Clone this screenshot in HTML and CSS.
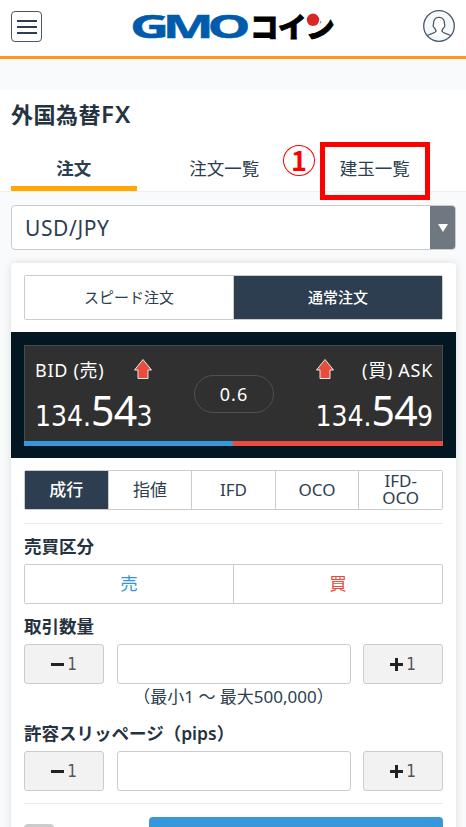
FILE: index.html
```html
<!DOCTYPE html>
<html lang="ja">
<head>
  <meta charset="UTF-8">
  <meta name="viewport" content="width=device-width, initial-scale=1.0">
  <title>外国為替FX | GMOコイン</title>
  <link rel="stylesheet" href="styles.css">
</head>
<body>
  <header>
    <button class="menu" aria-label="メニュー"><span></span><span></span><span></span></button>
    <svg class="logo" width="204" height="30" viewBox="0 0 204 30">
      <text class="logo-gmo" transform="translate(-1 26) scale(1.64 1)" textLength="73.500" lengthAdjust="spacing">GMO</text>
      <text class="logo-coin" transform="translate(119 25.500) scale(1.020 1)" textLength="83" lengthAdjust="spacing">コイン</text>
      <circle cx="182" cy="7.800" r="7.800" fill="#fff"/>
      <circle cx="182" cy="7.800" r="6.200" fill="#d92626"/>
    </svg>
    <svg class="user" width="32" height="32" viewBox="0 0 32 32">
      <circle cx="16" cy="16" r="15.300"/>
      <path d="M4.500 25.500c2.200-1.700 6.200-1.800 8-3.600 1.500-1.600-.3-2.600-1-3.900-1.200-.8-1.700-3-1-4-.2-4.400 1.900-6.600 5.500-6.600s5.700 2.200 5.500 6.600c.7 1 .2 3.200-1 4-.7 1.300-2.500 2.300-1 3.900 1.800 1.800 5.800 1.900 8 3.600"/>
    </svg>
  </header>

  <section class="page-head">
    <h1>外国為替<span>FX</span></h1>
    <nav>
      <a class="active">注文</a>
      <a>注文一覧</a>
      <a class="marked">建玉一覧<span class="mark-num">1</span><span class="mark-box"></span></a>
    </nav>
  </section>

  <main>
    <div class="select">
      <span>USD/JPY</span>
      <i></i>
    </div>

    <div class="card">
      <div class="seg mode">
        <button>スピード注文</button>
        <button class="on">通常注文</button>
      </div>

      <div class="rate">
        <div class="rate-box">
          <div class="side">
            <p class="side-name"><span>BID (売)</span>
              <svg width="20" height="22" viewBox="0 0 20 22"><path d="M10 1.500 18.500 12H15v8.500H5V12H1.500z"/></svg>
            </p>
            <p class="price">134.<b>54</b>3</p>
          </div>
          <div class="spread">0.6</div>
          <div class="side ask">
            <p class="side-name">
              <svg width="20" height="22" viewBox="0 0 20 22"><path d="M10 1.500 18.500 12H15v8.500H5V12H1.500z"/></svg>
              <span>(買) ASK</span></p>
            <p class="price">134.<b>54</b>9</p>
          </div>
        </div>
        <div class="rate-bar"></div>
      </div>

      <div class="seg type">
        <button class="on">成行</button>
        <button>指値</button>
        <button>IFD</button>
        <button>OCO</button>
        <button>IFD-<br>OCO</button>
      </div>

      <div class="form">
        <h2>売買区分</h2>
        <div class="seg trade">
          <button class="sell">売</button>
          <button class="buy">買</button>
        </div>

        <h2>取引数量</h2>
        <div class="stepper">
          <button><i class="minus"></i>1</button>
          <input type="text">
          <button><i class="plus"></i>1</button>
        </div>
        <p class="note">（最小1 ～ 最大500,000）</p>

        <h2>許容スリッページ（pips）</h2>
        <div class="stepper">
          <button><i class="minus"></i>1</button>
          <input type="text">
          <button><i class="plus"></i>1</button>
        </div>
      </div>

      <div class="submit">
        <span class="switch"></span>
        <button class="confirm"></button>
      </div>
    </div>
  </main>
</body>
</html>
```
FILE: styles.css
```css
* { box-sizing: border-box; margin: 0; padding: 0; }
body {
  font-family: "Noto Sans", "Noto Sans CJK JP", sans-serif;
  background: #f9fafc;
  color: #2c3e50;
  height: 827px;
  overflow: hidden;
}
button {
  font-family: inherit;
  color: inherit;
  border: none;
  background: #fff;
}

header {
  height: 59px;
  padding: 0 11px;
  background: #fff;
  border-bottom: 3px solid #fb9a1a;
  display: flex;
  justify-content: space-between;
}
.menu {
  width: 31px;
  height: 31px;
  margin-top: 11px;
  border: 1.500px solid #4a5867;
  border-radius: 4px;
  display: flex;
  flex-direction: column;
  align-items: center;
  justify-content: center;
  gap: 4px;
}
.menu span {
  width: 20px;
  height: 2px;
  background: #2c3e50;
}
.logo {
  margin-top: 12px;
  overflow: visible;
}
.logo-gmo {
  font: 700 33px "Open Sans", sans-serif;
  fill: #005bac;
  stroke: #005bac;
  stroke-width: 0.500;
}
.logo-coin {
  font: 900 28px "Noto Sans CJK JP", sans-serif;
  fill: #000;
  stroke: #000;
  stroke-width: 0.800;
}
.user {
  margin-top: 10px;
}
.user circle {
  fill: #f6f9fc;
  stroke: #4a5867;
  stroke-width: 1.300;
}
.user path {
  fill: #fff;
  stroke: #4a5867;
  stroke-width: 1.300;
}

.page-head {
  height: 102px;
  margin-top: 31px;
  padding: 0 11px;
  background: #fff;
  border-bottom: 1px solid #eee;
}
h1 {
  height: 56px;
  font-size: 22px;
  line-height: 47px;
  font-weight: 600;
  letter-spacing: 0.500px;
  color: #25323f;
}
h1 span {
  font-size: 24px;
  letter-spacing: 1px;
}
nav {
  display: flex;
  gap: 25px;
}
nav a {
  position: relative;
  width: 125.500px;
  height: 45px;
  font-size: 17.500px;
  line-height: 45px;
  text-align: center;
}
nav .active {
  font-weight: 600;
  border-bottom: 5px solid #ffa800;
}
.mark-box {
  position: absolute;
  left: 8px;
  top: -4px;
  width: 110px;
  height: 58px;
  border: 5px solid #f00;
}
.mark-num {
  position: absolute;
  left: -29px;
  top: -1px;
  width: 32px;
  height: 31px;
  border: 1px solid #f00;
  border-radius: 50%;
  font: 700 27px/28px "Noto Sans CJK JP", sans-serif;
  color: #f00;
}

main {
  padding: 13px 10px 0 11px;
}
.select {
  height: 45px;
  border: 1px solid #ccc;
  border-radius: 4px;
  background: #fff;
  display: flex;
  justify-content: space-between;
  overflow: hidden;
}
.select span {
  padding-left: 13px;
  font-size: 21px;
  line-height: 44px;
  letter-spacing: 0.600px;
}
.select i {
  width: 25px;
  background: #6f7880;
  display: flex;
  align-items: center;
  justify-content: center;
}
.select i::after {
  content: "";
  border: 5px solid transparent;
  border-top: 8px solid #fff;
  border-bottom: none;
}

.card {
  margin-top: 13px;
  height: 600px;
  background: #fff;
  border-radius: 4px;
  box-shadow: 0 0 9px rgba(0, 0, 0, 0.12);
}
.seg {
  display: flex;
  border: 1px solid #ccc;
  border-radius: 2px;
}
.seg button {
  flex: 1;
  font-size: 17.500px;
}
.seg button + button {
  border-left: 1px solid #ccc;
}
.seg .on {
  background: #2c3e50;
  color: #fff;
  font-weight: 500;
}
.card > .seg {
  margin: 0 13px;
}
.mode {
  position: relative;
  top: 12px;
  height: 45px;
}
.mode button {
  font-size: 15px;
  padding-bottom: 2px;
}

.rate {
  height: 126px;
  margin-top: 24px;
  padding: 13px 13px 0;
  background: #031722;
}
.rate-box {
  height: 96px;
  padding: 8px 9px 0 10px;
  background: #303030;
  border: 1px solid #4a4a4a;
  border-bottom: none;
  display: flex;
  justify-content: space-between;
  color: #fff;
}
.side {
  width: 118px;
}
.side-name {
  height: 29px;
  display: flex;
  align-items: center;
  justify-content: space-between;
  font-size: 18px;
  letter-spacing: 0.700px;
  white-space: nowrap;
}
.side-name svg {
  fill: #e74c3c;
  stroke: #e8e8e8;
  stroke-width: 1;
}
.price {
  font-family: "DejaVu Sans Condensed", "DejaVu Sans", sans-serif;
  font-stretch: condensed;
  font-size: 28px;
  line-height: 54px;
  white-space: nowrap;
}
.price b {
  font-family: "Noto Sans", sans-serif;
  font-size: 41px;
  font-weight: 400;
  letter-spacing: -0.700px;
}
.ask .price {
  text-align: right;
}
.spread {
  width: 80px;
  height: 38px;
  margin-top: 21px;
  border: 1px solid #505050;
  border-radius: 19px;
  text-align: center;
  font-size: 18px;
  line-height: 36px;
  letter-spacing: 1px;
}
.rate-bar {
  height: 5px;
  background: linear-gradient(to right, #3498db 50%, #e74c3c 50%);
}

.type {
  height: 40px;
  margin-top: 12px !important;
}
.type button {
  font-size: 17px;
  line-height: 17px;
  padding-bottom: 2px;
}

.form {
  margin: 13px 13px 0;
  padding-top: 6px;
  border-top: 1px solid #eaeaea;
  border-bottom: 1px solid #eaeaea;
}
h2 {
  height: 34px;
  font-size: 17.500px;
  line-height: 32px;
  font-weight: 600;
  color: #25323f;
}
.trade {
  height: 40px;
  margin-bottom: 6px;
}
.trade button {
  padding-bottom: 4px;
}
.sell { color: #3498db; }
.seg .buy { color: #e74c3c; }
.stepper {
  display: grid;
  grid-template-columns: 80px 1fr 80px;
  gap: 12.500px;
  height: 40px;
}
.stepper button, .stepper input {
  border: 1px solid #ccc;
  border-radius: 3px;
  min-width: 0;
}
.stepper button {
  background: #f2f2f2;
  font: 17px "DejaVu Sans Condensed", "DejaVu Sans", sans-serif;
  font-stretch: condensed;
  color: #555;
  display: flex;
  align-items: center;
  justify-content: center;
  gap: 3px;
}
.minus, .plus {
  width: 13px;
  height: 13px;
  background: linear-gradient(#222, #222) center / 13px 3px no-repeat;
}
.plus {
  background: linear-gradient(#222, #222) center / 13px 3px no-repeat, linear-gradient(#222, #222) center / 3px 13px no-repeat;
}
.note {
  height: 33px;
  font-size: 17px;
  line-height: 25px;
  text-align: center;
}
.form .stepper:last-child {
  margin-bottom: 12px;
}

.submit {
  margin: 13px 13px 0;
  display: flex;
  justify-content: space-between;
}
.switch {
  width: 30px;
  height: 30px;
  margin-top: 7px;
  background: #ccc;
  border-radius: 4px;
}
.confirm {
  width: 294px;
  height: 46px;
  background: #3498db;
  border-radius: 4px;
}
```
